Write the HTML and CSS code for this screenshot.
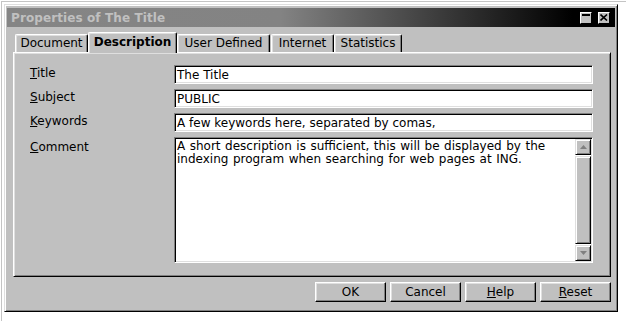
FILE: index.html
```html
<!DOCTYPE html>
<html lang="en">
<head>
    <meta charset="UTF-8">
    <title>Properties of The Title</title>
    <link rel="stylesheet" href="styles.css">
</head>
<body>
    <div class="desktop">
        <div class="window">
            <div class="titlebar">
                <span class="title">Properties of The Title</span>
                <div class="title-buttons">
                    <span class="tb-button tb-min"><span class="min-bar"></span></span>
                    <span class="tb-button tb-close">
                        <svg width="8" height="7" viewBox="0 0 8 7">
                            <path d="M0.5 0.5 L7 6.5 M7 0.5 L0.5 6.5" stroke="#000" stroke-width="1.6" fill="none"/>
                        </svg>
                    </span>
                </div>
            </div>

            <div class="tabs">
                <div class="tab tab-document">Document</div>
                <div class="tab tab-description active">Description</div>
                <div class="tab tab-user">User Defined</div>
                <div class="tab tab-internet">Internet</div>
                <div class="tab tab-statistics">Statistics</div>
            </div>

            <div class="panel">
                <div class="form">
                    <label class="label"><u>T</u>itle</label>
                    <div class="field">The Title</div>

                    <label class="label"><u>S</u>ubject</label>
                    <div class="field">PUBLIC</div>

                    <label class="label"><u>K</u>eywords</label>
                    <div class="field">A few keywords here, separated by comas,</div>

                    <label class="label label-top"><u>C</u>omment</label>
                    <div class="memo">
                        <div class="memo-text">A short description is sufficient, this will be displayed by the indexing program when searching for web pages at ING.</div>
                        <div class="scrollbar">
                            <span class="sb-button">
                                <svg width="7" height="4" viewBox="0 0 7 4"><path d="M3.5 0 L7 4 L0 4 Z" fill="#808080"/></svg>
                            </span>
                            <span class="sb-thumb"></span>
                            <span class="sb-button">
                                <svg width="7" height="4" viewBox="0 0 7 4"><path d="M0 0 L7 0 L3.5 4 Z" fill="#808080"/></svg>
                            </span>
                        </div>
                    </div>
                </div>
            </div>

            <div class="buttons">
                <button class="button">OK</button>
                <button class="button">Cancel</button>
                <button class="button"><u>H</u>elp</button>
                <button class="button"><u>R</u>eset</button>
            </div>
        </div>
    </div>
</body>
</html>
```

FILE: styles.css
```css
* {
    margin: 0;
    padding: 0;
    box-sizing: border-box;
}

body {
    font-family: "DejaVu Sans", "Liberation Sans", sans-serif;
    font-size: 12px;
    color: #000;
    background: #fff;
    width: 626px;
    height: 321px;
    overflow: hidden;
}

.desktop {
    margin: 1px 0 0 1px;
    height: 320px;
    border-top: 1px solid #c4c4c4;
    border-left: 1px solid #c4c4c4;
    padding: 2px 0 0 2px;
}

.window {
    width: 614px;
    height: 308px;
    background: #c0c0c0;
    border: 1px solid;
    border-color: #dfdfdf #000 #000 #dfdfdf;
    box-shadow: inset 1px 1px #fff, inset -1px -1px #808080;
    padding: 3px 2px 2px 2px;
    display: flex;
    flex-direction: column;
}

/* title bar */
.titlebar {
    height: 19px;
    display: flex;
    align-items: center;
    justify-content: space-between;
    background: linear-gradient(to right, #858585 0%, #838383 45%, #000 93%);
    padding: 0 5px 0 4px;
}

.title {
    font-weight: bold;
    font-size: 12px;
    color: #c0c0c0;
    letter-spacing: 0.1px;
}

.title-buttons {
    display: flex;
    gap: 6px;
}

.tb-button {
    width: 12px;
    height: 12px;
    background: #c0c0c0;
    border: 1px solid;
    border-color: #fff #000 #000 #fff;
    display: flex;
    align-items: center;
    justify-content: center;
}

.tb-min {
    align-items: flex-start;
}

.min-bar {
    width: 8px;
    height: 2px;
    margin-top: 1px;
    background: #000;
}

/* tabs */
.tabs {
    display: flex;
    align-items: flex-end;
    height: 20px;
    margin-top: 5px;
    padding-left: 8px;
}

.tab {
    height: 18px;
    line-height: 16px;
    text-align: center;
    background: #c0c0c0;
    border: 1px solid;
    border-bottom: none;
    border-color: #fff #000 #000 #fff;
    border-radius: 2px 2px 0 0;
    box-shadow: inset -1px 0 #808080, inset 1px 1px #dfdfdf;
    white-space: nowrap;
}

.tab.active {
    height: 21px;
    line-height: 18px;
    margin-bottom: -1px;
    font-weight: bold;
    position: relative;
    z-index: 1;
}

.tab-document { width: 73px; }
.tab-description { width: 89px; }
.tab-user { width: 93px; }
.tab-internet { width: 63px; margin-left: 1px; }
.tab-statistics { width: 68px; }

/* panel */
.panel {
    height: 225px;
    margin: 0 4px 0 6px;
    border: 1px solid;
    border-color: #fff #000 #000 #fff;
    box-shadow: inset 1px 1px #dfdfdf, inset -1px -1px #808080;
    padding: 12px 0 0 16px;
}

.form {
    display: grid;
    grid-template-columns: 144px 419px;
    grid-template-rows: 19px 19px 19px 126px;
    row-gap: 5px;
}

.label {
    line-height: 16px;
    align-self: start;
}

.label-top {
    padding-top: 2px;
}

.field,
.memo {
    background: #fff;
    border: 1px solid;
    border-color: #808080 #fff #fff #808080;
    box-shadow: inset 1px 1px #000, inset -1px -1px #dfdfdf;
}

.field {
    padding: 1px 0 0 2px;
    line-height: 16px;
    white-space: nowrap;
    overflow: hidden;
}

.memo {
    display: flex;
    padding: 1px;
}

.memo-text {
    flex: 1;
    padding: 1px 6px 0 1px;
    line-height: 13px;
    word-spacing: 0.7px;
}

.scrollbar {
    width: 16px;
    display: flex;
    flex-direction: column;
}

.sb-button,
.sb-thumb {
    background: #c0c0c0;
    border: 1px solid;
    border-color: #dfdfdf #000 #000 #dfdfdf;
    box-shadow: inset 1px 1px #fff, inset -1px -1px #808080;
}

.sb-button {
    height: 16px;
    display: flex;
    align-items: center;
    justify-content: center;
}

.sb-thumb {
    flex: 1;
    margin: 1px 0;
}

/* buttons */
.buttons {
    display: flex;
    justify-content: flex-end;
    gap: 4px;
    margin: 5px 4px 0 0;
}

.button {
    width: 71px;
    height: 20px;
    font-family: inherit;
    font-size: 12px;
    color: #000;
    background: #c0c0c0;
    border: 1px solid;
    border-color: #fff #000 #000 #fff;
    box-shadow: inset -1px -1px #808080, inset 1px 1px #dfdfdf;
}
```
